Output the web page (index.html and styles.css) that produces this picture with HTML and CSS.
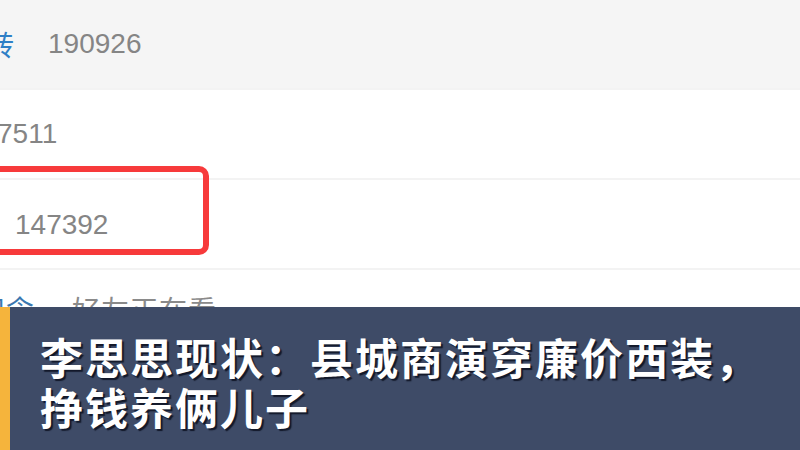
FILE: index.html
```html
<!DOCTYPE html>
<html lang="zh-CN">
<head>
    <meta charset="UTF-8">
    <title>视频数据</title>
    <link rel="stylesheet" href="styles.css">
</head>
<body>
    <div class="list">
        <div class="row row-head">
            <span class="label label-cut">转</span>
            <span class="value">190926</span>
        </div>
        <div class="row">
            <span class="value value-cut">7511</span>
        </div>
        <div class="row row-marked">
            <span class="value value-inset">147392</span>
            <div class="mark"></div>
        </div>
        <div class="row row-last">
            <span class="label label-cut2">纪念</span>
            <span class="friends">好友正在看</span>
        </div>
    </div>

    <div class="caption">
        <div class="caption-bar"></div>
        <div class="caption-text">李思思现状：县城商演穿廉价西装，<br>挣钱养俩儿子</div>
    </div>
</body>
</html>
```

FILE: styles.css
```css
body {
    margin: 0;
    padding: 0;
    width: 800px;
    height: 450px;
    overflow: hidden;
    position: relative;
    background-color: #fff;
    font-family: "Liberation Sans", "Noto Sans CJK SC", sans-serif;
}

.list {
    display: flex;
    flex-direction: column;
}

.row {
    height: 88px;
    border-bottom: 2px solid #f3f3f3;
    display: flex;
    align-items: center;
    font-size: 28px;
    color: #858585;
    position: relative;
}

.row-head {
    background-color: #f5f5f5;
}

.label {
    font-family: "Noto Sans CJK SC", sans-serif;
    color: #2f7fc6;
}

.label-cut {
    margin-left: -14px;
    margin-right: 34px;
}

.value-cut {
    margin-left: -3px;
}

.value-inset {
    margin-left: 15px;
    margin-top: 1px;
}

.mark {
    position: absolute;
    left: -20px;
    top: -14px;
    width: 217px;
    height: 77px;
    border: 6px solid #f73a3b;
    border-radius: 10px;
}

.row-last {
    border-bottom: none;
    align-items: flex-start;
    padding-top: 22px;
    height: 60px;
}

.row-last .label,
.friends {
    font-family: "Noto Sans CJK SC", sans-serif;
    font-size: 28px;
    line-height: 34px;
    letter-spacing: 1px;
}

.label-cut2 {
    margin-left: -23px;
    margin-right: 37px;
    color: #3a78b0;
}

.friends {
    color: #8a8a8a;
}

.caption {
    position: absolute;
    left: 0;
    top: 307px;
    width: 800px;
    height: 143px;
    background-color: #3e4b67;
    display: flex;
}

.caption-bar {
    width: 10px;
    background-color: #f5b43c;
}

.caption-text {
    padding: 24px 0 0 30px;
    font-family: "Noto Sans CJK SC", sans-serif;
    font-size: 43px;
    font-weight: bold;
    line-height: 50px;
    letter-spacing: 2px;
    color: #fff;
    text-shadow: 2px 2px 1px rgba(10, 15, 30, 0.85);
}
```
